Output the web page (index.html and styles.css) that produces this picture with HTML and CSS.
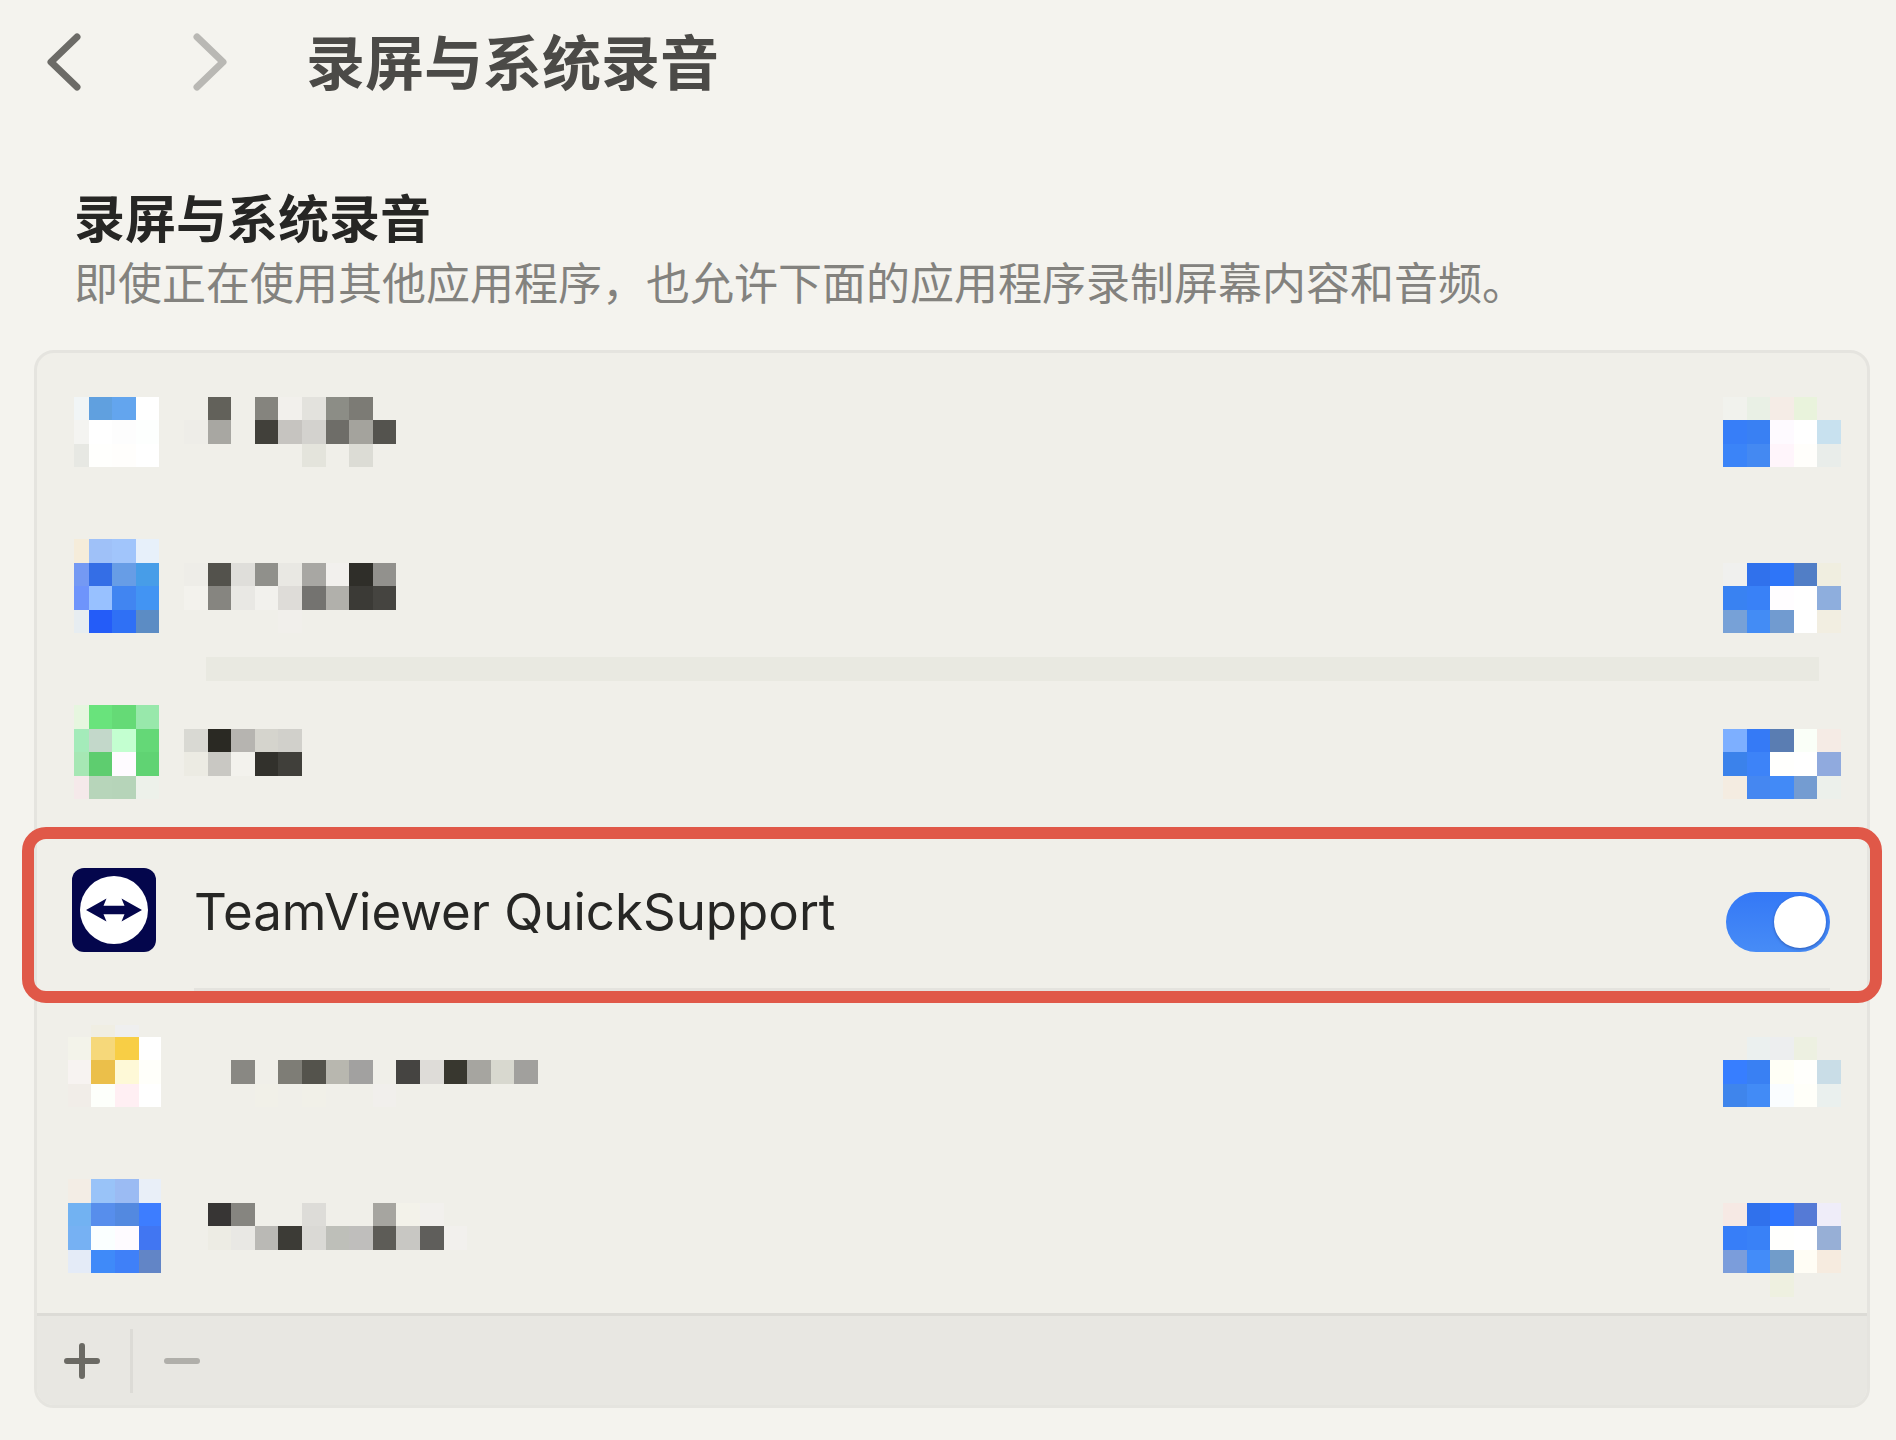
FILE: index.html
```html
<!DOCTYPE html>
<html lang="zh-CN">
<head>
    <meta charset="UTF-8">
    <meta name="viewport" content="width=device-width, initial-scale=1.0">
    <title>录屏与系统录音</title>
    <link rel="stylesheet" href="styles.css">
</head>
<body>
    <header class="toolbar">
        <button class="nav" type="button">
            <svg width="36" height="60" viewBox="0 0 36 60"><path d="M31 5 L5 30 L31 55"/></svg>
        </button>
        <button class="nav" type="button" disabled>
            <svg width="36" height="60" viewBox="0 0 36 60"><path d="M5 5 L31 30 L5 55"/></svg>
        </button>
        <h1>录屏与系统录音</h1>
    </header>

    <main>
        <h2>录屏与系统录音</h2>
        <p class="hint">即使正在使用其他应用程序，也允许下面的应用程序录制屏幕内容和音频。</p>

        <div class="panel">
            <ul class="apps">
                <!-- Pixelated rows: every rect is one mosaic cell -->
                <li class="row high">
                    <svg class="mosaic icon cut" viewBox="0.4 0 3.55 5">
                        <rect x="0" y="1" fill="#f1f5f6"/><rect x="1" y="1" fill="#60a0df"/><rect x="2" y="1" fill="#63a5ee"/><rect x="3" y="1" fill="#ffffff"/>
                        <rect x="0" y="2" fill="#f4f4f1"/><rect x="1" y="2" fill="#ffffff"/><rect x="2" y="2" fill="#fdfdfd"/><rect x="3" y="2" fill="#fdfffe"/>
                        <rect x="0" y="3" fill="#e7e8e3"/><rect x="1" y="3" fill="#fffffd"/><rect x="2" y="3" fill="#fffefc"/><rect x="3" y="3" fill="#ffffff"/>
                    </svg>
                    <svg class="mosaic label" viewBox="0 0 15 5">
                        <rect x="1" y="1" fill="#62615a"/><rect x="3" y="1" fill="#85847e"/><rect x="4" y="1" fill="#f2f0ec"/><rect x="5" y="1" fill="#e3e2dd"/><rect x="6" y="1" fill="#8c8d86"/><rect x="7" y="1" fill="#7c7b75"/>
                        <rect x="0" y="2" fill="#eeede8"/><rect x="1" y="2" fill="#a8a7a2"/><rect x="3" y="2" fill="#41403a"/><rect x="4" y="2" fill="#c6c4c0"/><rect x="5" y="2" fill="#d3d2ce"/><rect x="6" y="2" fill="#6e6d68"/><rect x="7" y="2" fill="#a4a39d"/><rect x="8" y="2" fill="#54534e"/>
                        <rect x="5" y="3" fill="#e4e4dc"/><rect x="7" y="3" fill="#dcdcd5"/>
                    </svg>
                    <svg class="mosaic toggle" viewBox="0 0 5 5">
                        <rect x="0" y="1" fill="#f1f2ed"/><rect x="1" y="1" fill="#e9f0e5"/><rect x="2" y="1" fill="#f5ece6"/><rect x="3" y="1" fill="#e9f3dc"/>
                        <rect x="0" y="2" fill="#377ef8"/><rect x="1" y="2" fill="#3980f3"/><rect x="2" y="2" fill="#fefaff"/><rect x="3" y="2" fill="#ffffff"/><rect x="4" y="2" fill="#c8e1ef"/>
                        <rect x="0" y="3" fill="#3b84f8"/><rect x="1" y="3" fill="#4489f2"/><rect x="2" y="3" fill="#fff5fb"/><rect x="3" y="3" fill="#fffefb"/><rect x="4" y="3" fill="#e9edea"/>
                    </svg>
                </li>
                <li class="row barred">
                    <svg class="mosaic icon cut" viewBox="0.4 0 3.55 5">
                        <rect x="0" y="0" fill="#f5ecda"/><rect x="1" y="0" fill="#9fc1f8"/><rect x="2" y="0" fill="#a1c5fb"/><rect x="3" y="0" fill="#e7f0fa"/>
                        <rect x="0" y="1" fill="#7499f3"/><rect x="1" y="1" fill="#346ee6"/><rect x="2" y="1" fill="#679de6"/><rect x="3" y="1" fill="#479de8"/>
                        <rect x="0" y="2" fill="#6e94fb"/><rect x="1" y="2" fill="#98c1ff"/><rect x="2" y="2" fill="#4185f1"/><rect x="3" y="2" fill="#4294f3"/>
                        <rect x="0" y="3" fill="#e7edf1"/><rect x="1" y="3" fill="#245cf8"/><rect x="2" y="3" fill="#2f70f5"/><rect x="3" y="3" fill="#5c8cc4"/>
                    </svg>
                    <svg class="mosaic label" viewBox="0 0 15 5">
                        <rect x="0" y="1" fill="#eeede8"/><rect x="1" y="1" fill="#53524c"/><rect x="2" y="1" fill="#dfdeda"/><rect x="3" y="1" fill="#90908b"/><rect x="4" y="1" fill="#e9e8e3"/><rect x="5" y="1" fill="#a8a7a3"/><rect x="6" y="1" fill="#f2f0ed"/><rect x="7" y="1" fill="#2f2e29"/><rect x="8" y="1" fill="#92918d"/>
                        <rect x="0" y="2" fill="#f3f2ed"/><rect x="1" y="2" fill="#868580"/><rect x="2" y="2" fill="#e9e8e4"/><rect x="3" y="2" fill="#f2f1ed"/><rect x="4" y="2" fill="#dedcd8"/><rect x="5" y="2" fill="#747370"/><rect x="6" y="2" fill="#b1b0ab"/><rect x="7" y="2" fill="#3b3a36"/><rect x="8" y="2" fill="#454440"/>
                        <rect x="4" y="3" fill="#f1efeb"/>
                    </svg>
                    <svg class="mosaic toggle" viewBox="0 0 5 5">
                        <rect x="0" y="1" fill="#f0f0ee"/><rect x="1" y="1" fill="#3071ec"/><rect x="2" y="1" fill="#2e75f8"/><rect x="3" y="1" fill="#517ec6"/><rect x="4" y="1" fill="#f0eee0"/>
                        <rect x="0" y="2" fill="#3982f2"/><rect x="1" y="2" fill="#3981f7"/><rect x="2" y="2" fill="#fffdff"/><rect x="3" y="2" fill="#ffffff"/><rect x="4" y="2" fill="#8eaedd"/>
                        <rect x="0" y="3" fill="#77a1d7"/><rect x="1" y="3" fill="#438cf5"/><rect x="2" y="3" fill="#719bd0"/><rect x="3" y="3" fill="#ffffff"/><rect x="4" y="3" fill="#f2eee1"/>
                    </svg>
                </li>
                <li class="row low">
                    <svg class="mosaic icon cut" viewBox="0.4 0 3.55 5">
                        <rect x="0" y="0" fill="#e6f6df"/><rect x="1" y="0" fill="#69e37c"/><rect x="2" y="0" fill="#65da76"/><rect x="3" y="0" fill="#98e8ab"/>
                        <rect x="0" y="1" fill="#a4ebba"/><rect x="1" y="1" fill="#c3d8ca"/><rect x="2" y="1" fill="#c3ffd0"/><rect x="3" y="1" fill="#64d877"/>
                        <rect x="0" y="2" fill="#a6e7b4"/><rect x="1" y="2" fill="#5ecd6f"/><rect x="2" y="2" fill="#fefbff"/><rect x="3" y="2" fill="#60d373"/>
                        <rect x="0" y="3" fill="#f5e9ea"/><rect x="1" y="3" fill="#b7d5ba"/><rect x="2" y="3" fill="#b6d4b9"/><rect x="3" y="3" fill="#edf1ea"/>
                    </svg>
                    <svg class="mosaic label" viewBox="0 0 15 5">
                        <rect x="0" y="1" fill="#d9d9d3"/><rect x="1" y="1" fill="#2a2923"/><rect x="2" y="1" fill="#b6b4b0"/><rect x="3" y="1" fill="#d5d4cd"/><rect x="4" y="1" fill="#d1d0cb"/>
                        <rect x="0" y="2" fill="#ecebe3"/><rect x="1" y="2" fill="#c9c8c3"/><rect x="2" y="2" fill="#f3f2ed"/><rect x="3" y="2" fill="#32312c"/><rect x="4" y="2" fill="#403f3a"/>
                    </svg>
                    <svg class="mosaic toggle" viewBox="0 0 5 5">
                        <rect x="0" y="1" fill="#7dafff"/><rect x="1" y="1" fill="#357af6"/><rect x="2" y="1" fill="#5a7db2"/><rect x="3" y="1" fill="#fafff8"/><rect x="4" y="1" fill="#f5ebe5"/>
                        <rect x="0" y="2" fill="#3b82eb"/><rect x="1" y="2" fill="#3d83f8"/><rect x="2" y="2" fill="#fffffd"/><rect x="3" y="2" fill="#ffffff"/><rect x="4" y="2" fill="#90aade"/>
                        <rect x="0" y="3" fill="#f4ece1"/><rect x="1" y="3" fill="#4587f1"/><rect x="2" y="3" fill="#428af7"/><rect x="3" y="3" fill="#749cd1"/><rect x="4" y="3" fill="#ecf0eb"/>
                    </svg>
                </li>
                <li class="row app">
                    <svg class="app-icon" width="84" height="84" viewBox="0 0 84 84">
                        <rect width="84" height="84" rx="12" fill="#04064c"/>
                        <circle cx="42" cy="42" r="34" fill="#ffffff"/>
                        <path d="M14 42 L34.5 30.5 L31.5 37.8 H52.5 L49.5 30.5 L70 42 L49.5 53.5 L52.5 46.2 H31.5 L34.5 53.5 Z" fill="#04064c"/>
                    </svg>
                    <label class="app-name" for="quicksupport">TeamViewer QuickSupport</label>
                    <input class="switch" id="quicksupport" type="checkbox" role="switch" checked>
                </li>
                <li class="row high">
                    <svg class="mosaic icon" viewBox="0 0 3.92 5">
                        <rect x="1" y="0.5" fill="#f0eee3"/><rect x="2" y="0.5" fill="#efefef"/>
                        <rect x="0" y="1" fill="#f3f3ea"/><rect x="1" y="1" fill="#f6d87a"/><rect x="2" y="1" fill="#f8ce45"/><rect x="3" y="1" fill="#ffffff"/>
                        <rect x="0" y="2" fill="#f7f3f1"/><rect x="1" y="2" fill="#ebbf4a"/><rect x="2" y="2" fill="#fef9d7"/><rect x="3" y="2" fill="#fffffa"/>
                        <rect x="0" y="3" fill="#f1ede8"/><rect x="1" y="3" fill="#fdfffb"/><rect x="2" y="3" fill="#ffeff3"/><rect x="3" y="3" fill="#ffffff"/>
                    </svg>
                    <svg class="mosaic label" viewBox="0 0 15 5">
                        <rect x="2" y="2" fill="#898883"/><rect x="4" y="2" fill="#7e7d76"/><rect x="5" y="2" fill="#54534c"/><rect x="6" y="2" fill="#b8b7af"/><rect x="7" y="2" fill="#a2a1a0"/><rect x="9" y="2" fill="#454441"/><rect x="10" y="2" fill="#dedcd8"/><rect x="11" y="2" fill="#38372f"/><rect x="12" y="2" fill="#a6a5a0"/><rect x="13" y="2" fill="#d8d8cf"/><rect x="14" y="2" fill="#a1a09d"/>
                        <rect x="3" y="3" fill="#f1f0e8"/><rect x="5" y="3" fill="#f1f0e8"/><rect x="8" y="3" fill="#f1efec"/>
                    </svg>
                    <svg class="mosaic toggle" viewBox="0 0 5 5">
                        <rect x="1" y="1" fill="#ebf0ef"/><rect x="2" y="1" fill="#edeeef"/><rect x="3" y="1" fill="#edf0e1"/>
                        <rect x="0" y="2" fill="#377eff"/><rect x="1" y="2" fill="#3980f3"/><rect x="2" y="2" fill="#fffff6"/><rect x="3" y="2" fill="#fffffc"/><rect x="4" y="2" fill="#c9dde7"/>
                        <rect x="0" y="3" fill="#3f85ec"/><rect x="1" y="3" fill="#428bf6"/><rect x="2" y="3" fill="#fafdff"/><rect x="3" y="3" fill="#fffff9"/><rect x="4" y="3" fill="#eaf0ee"/>
                    </svg>
                </li>
                <li class="row">
                    <svg class="mosaic icon" viewBox="0 0 3.92 5">
                        <rect x="0" y="0" fill="#f3ede5"/><rect x="1" y="0" fill="#99c3f8"/><rect x="2" y="0" fill="#9bbbf3"/><rect x="3" y="0" fill="#e9eff8"/>
                        <rect x="0" y="1" fill="#72b2f2"/><rect x="1" y="1" fill="#578eec"/><rect x="2" y="1" fill="#5389e0"/><rect x="3" y="1" fill="#3d7dff"/>
                        <rect x="0" y="2" fill="#76b1f3"/><rect x="1" y="2" fill="#faffff"/><rect x="2" y="2" fill="#fefbff"/><rect x="3" y="2" fill="#4176f2"/>
                        <rect x="0" y="3" fill="#e4ebf7"/><rect x="1" y="3" fill="#3f8af9"/><rect x="2" y="3" fill="#3f80f8"/><rect x="3" y="3" fill="#6285c6"/>
                    </svg>
                    <svg class="mosaic label" viewBox="0 0 15 5">
                        <rect x="1" y="1" fill="#373534"/><rect x="2" y="1" fill="#868580"/><rect x="5" y="1" fill="#dddcd8"/><rect x="8" y="1" fill="#a6a5a0"/><rect x="9" y="1" fill="#f3f2ea"/><rect x="10" y="1" fill="#f2f0ed"/>
                        <rect x="1" y="2" fill="#edece4"/><rect x="2" y="2" fill="#e9e8e4"/><rect x="3" y="2" fill="#bab9b5"/><rect x="4" y="2" fill="#3c3b36"/><rect x="5" y="2" fill="#dad9d5"/><rect x="6" y="2" fill="#bebfb9"/><rect x="7" y="2" fill="#bfbebc"/><rect x="8" y="2" fill="#5d5c57"/><rect x="9" y="2" fill="#c8c7c3"/><rect x="10" y="2" fill="#5f5e5b"/><rect x="11" y="2" fill="#f2f0ed"/>
                    </svg>
                    <svg class="mosaic toggle" viewBox="0 0 5 5">
                        <rect x="0" y="1" fill="#f6e9e4"/><rect x="1" y="1" fill="#3071ec"/><rect x="2" y="1" fill="#2e75ff"/><rect x="3" y="1" fill="#557ad6"/><rect x="4" y="1" fill="#efedf9"/>
                        <rect x="0" y="2" fill="#377ef8"/><rect x="1" y="2" fill="#3981f7"/><rect x="2" y="2" fill="#fffffd"/><rect x="3" y="2" fill="#ffffff"/><rect x="4" y="2" fill="#97afd6"/>
                        <rect x="0" y="3" fill="#7b9ddb"/><rect x="1" y="3" fill="#438cf9"/><rect x="2" y="3" fill="#719cca"/><rect x="3" y="3" fill="#fffdf5"/><rect x="4" y="3" fill="#f6ebdf"/>
                        <rect x="2" y="4" fill="#eef0e0"/>
                    </svg>
                </li>
            </ul>
            <div class="actions">
                <button class="add" type="button">
                    <svg width="36" height="36" viewBox="0 0 36 36"><path d="M3 18 H33 M18 3 V33"/></svg>
                </button>
                <button class="remove" type="button" disabled>
                    <svg width="36" height="36" viewBox="0 0 36 36"><path d="M3 18 H33"/></svg>
                </button>
            </div>
        </div>
    </main>
</body>
</html>
```
FILE: styles.css
```css
* {
    margin: 0;
    padding: 0;
    box-sizing: border-box;
}

body {
    font-family: "Inter", "Noto Sans CJK SC", sans-serif;
    background-color: #f4f3ee;
    color: #262624;
}

svg {
    display: block;
}

button {
    background: none;
    border: none;
    fill: none;
    stroke-linecap: round;
    stroke-linejoin: round;
}

/* Top bar */
.toolbar {
    display: flex;
    align-items: center;
    height: 124px;
    padding-left: 46px;
}

.nav {
    margin-right: 110px;
    stroke: #6c6b67;
    stroke-width: 7px;
}

.nav:disabled {
    margin-right: 78px;
    stroke: #b9b8b4;
}

h1 {
    padding-top: 4px;
    font-size: 59px;
    line-height: 64px;
    color: #4b4a47;
}

/* Section */
main {
    padding: 64px 26px 32px 34px;
}

h2 {
    padding-left: 40px;
    font-size: 51px;
    line-height: 64px;
}

.hint {
    padding-left: 40px;
    font-size: 44px;
    line-height: 64px;
    color: #83827e;
}

.panel {
    margin-top: 34px;
    border: 3px solid #e5e4df;
    border-radius: 20px;
    background-color: #f0efe9;
}

.apps {
    list-style: none;
}

.row {
    position: relative;
    display: grid;
    grid-template-columns: 96px 1fr 122px;
    column-gap: 20px;
    height: 160px;
    padding: 26px 23px 0 29px;
}

.row.high {
    padding-top: 20px;
}

.row.low {
    padding-top: 32px;
}

/* Mosaic cells are one unit wide and high */
.mosaic {
    height: 118px;
    shape-rendering: crispEdges;
}

.mosaic rect {
    width: 1px;
    height: 1px;
}

.mosaic.icon {
    width: 94px;
    justify-self: center;
}

.mosaic.icon.cut {
    width: 85px;
    margin-left: 4px;
}

.mosaic.label {
    width: 358px;
}

.mosaic.toggle {
    width: 120px;
}

.barred::after {
    content: "";
    position: absolute;
    left: 169px;
    right: 48px;
    bottom: -8px;
    height: 24px;
    background-color: #e9e9e1;
}

/* Highlighted app */
.row.app {
    align-items: center;
    padding-top: 0;
    padding-bottom: 6px;
}

.app::before {
    content: "";
    position: absolute;
    left: 157px;
    right: 37px;
    bottom: 2px;
    height: 3px;
    background-color: #e4e3de;
}

.app::after {
    content: "";
    position: absolute;
    inset: -6px -15px -10px;
    border: 12px solid #e05848;
    border-radius: 24px;
    pointer-events: none;
    z-index: 1;
}

.app-icon {
    justify-self: center;
}

.app-name {
    padding-top: 4px;
    padding-left: 12px;
    font-size: 51px;
    line-height: 64px;
}

.switch {
    appearance: none;
    display: flex;
    align-items: center;
    width: 104px;
    height: 60px;
    margin-top: 24px;
    margin-left: 4px;
    padding: 4px;
    border-radius: 30px;
    background: linear-gradient(#3478f6, #478cf6);
    cursor: pointer;
}

.switch::before {
    content: "";
    width: 52px;
    height: 52px;
    border-radius: 50%;
    background-color: #fff;
    box-shadow: 0 1px 3px rgba(0, 0, 60, 0.35);
}

.switch:checked::before {
    margin-left: auto;
}

.switch:not(:checked) {
    background: #d5d4cf;
}

/* Footer with add and remove */
.actions {
    display: flex;
    align-items: center;
    height: 92px;
    border-top: 3px solid #dcdbd6;
    border-radius: 0 0 17px 17px;
    background-color: #e8e7e2;
    stroke-width: 6px;
}

.actions button {
    display: flex;
    align-items: center;
    justify-content: center;
    height: 64px;
}

.add {
    width: 96px;
    padding-right: 3px;
    border-right: 3px solid #dcdbd6;
    stroke: #6b6a64;
}

.remove {
    width: 98px;
    stroke: #b0afaa;
}
```
